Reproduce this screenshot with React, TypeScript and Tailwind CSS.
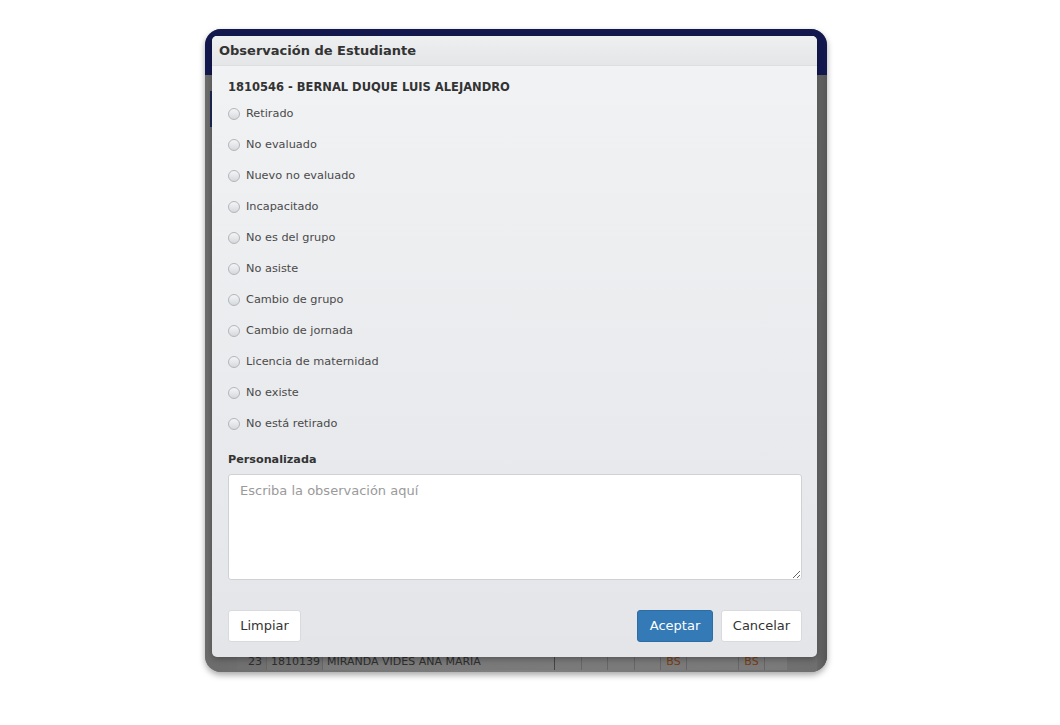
import React from "react";

const options = [
  "Retirado",
  "No evaluado",
  "Nuevo no evaluado",
  "Incapacitado",
  "No es del grupo",
  "No asiste",
  "Cambio de grupo",
  "Cambio de jornada",
  "Licencia de maternidad",
  "No existe",
  "No está retirado",
];

function Radio() {
  return (
    <span className="inline-block w-[12px] h-[12px] rounded-full border border-[#b3b6ba] bg-gradient-to-b from-[#f4f5f6] to-[#d6d9dc] shrink-0" />
  );
}

export default function App() {
  return (
    <div
      className="w-[1060px] h-[725px] bg-white relative"
      style={{ fontFamily: '"DejaVu Sans", Verdana, sans-serif' }}
    >
      <div className="absolute left-[205px] top-[29px] w-[622px] h-[643px] rounded-[16px] overflow-hidden bg-[#7b7b7b] shadow-[0_3px_6px_rgba(0,0,0,0.35)] flex flex-col">
        <div className="h-[46px] bg-[#13194f] shrink-0" />
        <div className="flex-1 bg-gradient-to-r from-[#6c6c6c] via-[#808080] to-[#6e6e6e] relative">
          <div className="absolute left-[5px] top-[16px] w-[3px] h-[36px] bg-[#1f2a55]" />
          <div className="absolute right-[0px] top-[0px] w-[10px] h-full bg-gradient-to-r from-[#6a6a6a] to-[#555]" />
        </div>
        <div className="absolute left-[32px] right-[40px] top-[625px] h-[16px] flex items-center text-[11px] text-[#2e2e2e] bg-[#7a7a7a]">
          <div className="w-[30px] text-right pr-[4px] border-r border-[#666] bg-[#707070]">23</div>
          <div className="w-[56px] pl-[4px] border-r border-[#666] bg-[#747474]">1810139</div>
          <div className="w-[232px] pl-[4px] border-r border-[#444]">MIRANDA VIDES ANA MARIA</div>
          <div className="w-[27px] h-full border-r border-[#666]" />
          <div className="w-[26px] h-full border-r border-[#666]" />
          <div className="w-[27px] h-full border-r border-[#666]" />
          <div className="w-[26px] h-full border-r border-[#666]" />
          <div className="w-[26px] h-full border-r border-[#666] text-[#7a3d12] text-center">BS</div>
          <div className="w-[52px] h-full border-r border-[#666]" />
          <div className="w-[26px] h-full border-r border-[#666] text-[#7a3d12] text-center">BS</div>
        </div>
      </div>

      <div className="absolute left-[212px] top-[36px] w-[605px] h-[621px] rounded-[5px] overflow-hidden bg-gradient-to-b from-[#f2f3f5] to-[#e3e5e8] flex flex-col shadow-[0_2px_6px_rgba(0,0,0,0.3)]">
        <div className="h-[30px] shrink-0 bg-gradient-to-b from-[#eeeff1] to-[#e4e6e8] flex items-center px-[7px] border-b border-[#dcdee1]">
          <span className="text-[13px] font-bold text-[#333]">Observación de Estudiante</span>
        </div>
        <div className="pl-[16px] pr-[15px] pt-[12px] flex flex-col">
          <div className="text-[11.5px] leading-[18px] font-bold text-[#333] mb-[2px]">
            1810546 - BERNAL DUQUE LUIS ALEJANDRO
          </div>
          {options.map((o) => (
            <div key={o} className="h-[31px] flex items-center gap-[6px] pt-[1px]">
              <Radio />
              <span className="text-[11.3px] text-[#4a4a4a]">{o}</span>
            </div>
          ))}
          <div className="mt-[12px] text-[11.2px] leading-[18px] font-bold text-[#333]">Personalizada</div>
          <textarea
            placeholder="Escriba la observación aquí"
            className="mt-[5px] h-[106px] w-full rounded-[3px] border border-[#cfd1d4] bg-white px-[11px] py-[6px] text-[13px] text-[#555] placeholder:text-[#9a9a9a] outline-none"
            style={{ fontFamily: '"DejaVu Sans", Verdana, sans-serif' }}
          />
          <div className="mt-[30px] flex items-center">
            <button className="h-[32px] w-[73px] rounded-[3px] border border-[#d8dadd] bg-white text-[13px] text-[#333]">
              Limpiar
            </button>
            <div className="flex-1" />
            <button className="h-[32px] w-[76px] rounded-[3px] border border-[#2e6da4] bg-[#337ab7] text-[13px] text-white">
              Aceptar
            </button>
            <button className="ml-[8px] h-[32px] w-[81px] rounded-[3px] border border-[#d8dadd] bg-white text-[13px] text-[#333]">
              Cancelar
            </button>
          </div>
        </div>
      </div>
    </div>
  );
}
